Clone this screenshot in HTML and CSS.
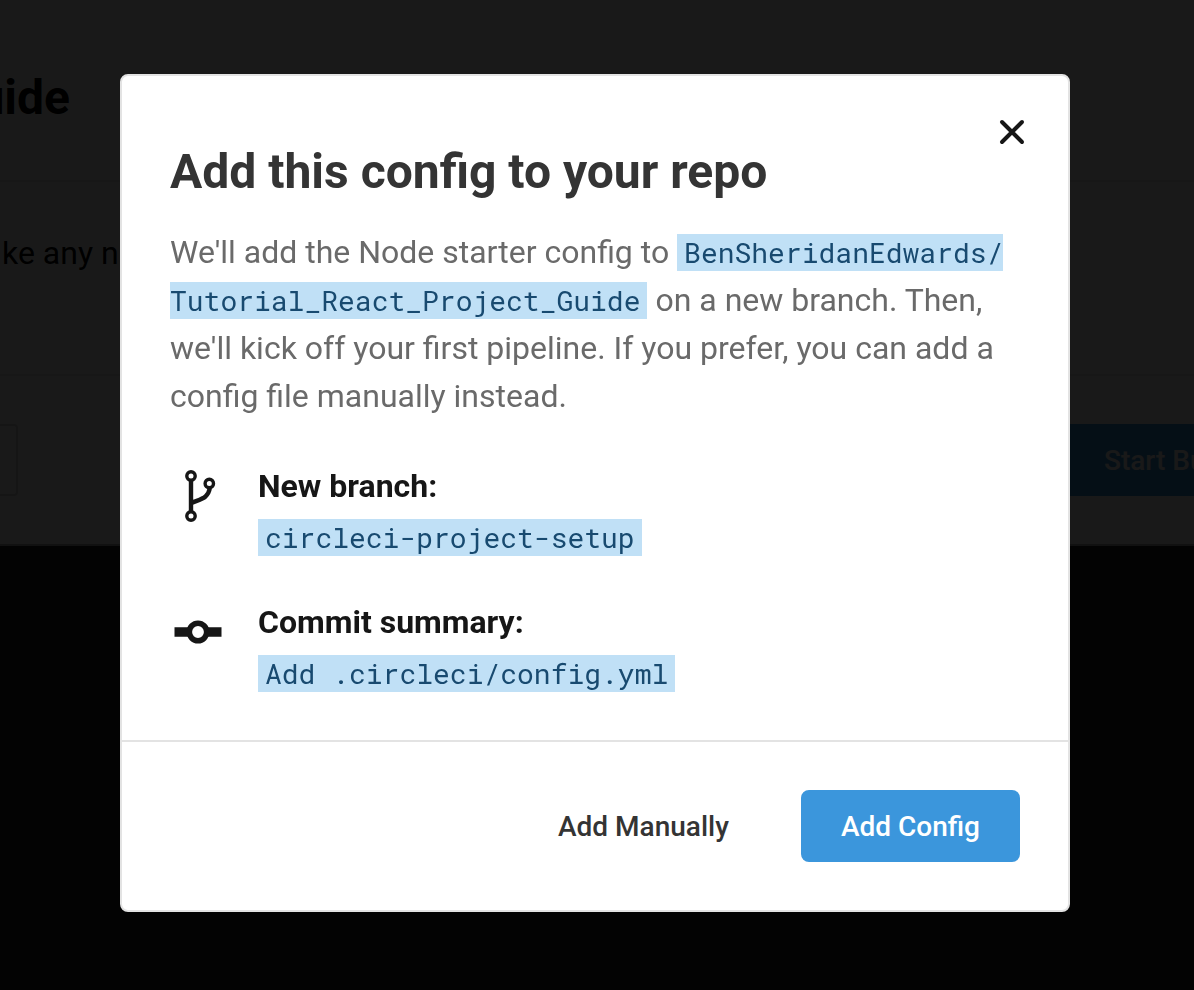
FILE: index.html
```html
<!DOCTYPE html>
<html lang="en">
<head>
<meta charset="utf-8">
<meta name="viewport" content="width=device-width, initial-scale=1">
<title>Add this config to your repo</title>
<link rel="stylesheet" href="styles.css">
</head>
<body>
<main class="page">
  <header class="page-header"><h1 class="page-title">uide</h1></header>
  <section class="page-intro"><p class="page-text">ke any n</p></section>
  <section class="page-actions">
    <div class="picker"></div>
    <button class="start-button" type="button" tabindex="-1">Start Bu</button>
  </section>
</main>
<div class="overlay">
  <div class="modal" role="dialog" aria-modal="true" aria-labelledby="modal-title">
    <div class="modal-body">
      <button class="close" type="button" aria-label="Close">
        <svg width="28" height="28" viewBox="0 0 28 28" fill="none" stroke="currentColor" stroke-width="4" stroke-linecap="round"><path d="M4 4l20 20M24 4L4 24"/></svg>
      </button>
      <h2 class="modal-title" id="modal-title">Add this config to your repo</h2>
      <p class="description">We'll add the Node starter config to <code class="code">BenSheridanEdwards/<wbr>Tutorial_React_Project_Guide</code> on a new branch. Then, we'll kick off your first pipeline. If you prefer, you can add a config file manually instead.</p>
      <dl class="details">
        <div class="detail">
          <svg class="detail-icon" width="56" height="56" viewBox="0 0 56 56" fill="none" stroke="currentColor" stroke-width="4.4"><circle cx="21" cy="8" r="4.200" stroke-width="3.400"/><circle cx="39.300" cy="15.500" r="4.200" stroke-width="3.400"/><circle cx="21" cy="48" r="4.200" stroke-width="3.400"/><path d="M21 12.500v31M21 35.200C27 32.500 32 31.500 35.500 28.500C38 26 39.200 24 39.700 20.500"/></svg>
          <div class="detail-text">
            <dt class="label">New branch:</dt>
            <dd class="value"><code class="code">circleci-project-setup</code></dd>
          </div>
        </div>
        <div class="detail">
          <svg class="detail-icon" width="56" height="56" viewBox="0 0 56 56" fill="none" stroke="currentColor"><circle cx="28" cy="28" r="8.700" stroke-width="5.600"/><path d="M4.500 28H19M37 28h14.500" stroke-width="9.600"/></svg>
          <div class="detail-text">
            <dt class="label">Commit summary:</dt>
            <dd class="value"><code class="code">Add .circleci/config.yml</code></dd>
          </div>
        </div>
      </dl>
    </div>
    <div class="modal-footer">
      <button class="button" type="button">Add Manually</button>
      <button class="button button-primary" type="button">Add Config</button>
    </div>
  </div>
</div>
</body>
</html>
```
FILE: styles.css
```css
* { box-sizing: border-box; }

body {
  margin: 0;
  background: #222;
  font-family: Roboto, "Liberation Sans", sans-serif;
  color: #161616;
  overflow: hidden;
}

h1, h2, p, dl, dd { margin: 0; }

button {
  font: inherit;
  border: 0;
  cursor: pointer;
}

.page { background: #fff; }

.page-header {
  display: flex;
  height: 182px;
  padding-top: 70px;
  border-bottom: 2px solid #e3e3e3;
}

.page-title {
  display: flex;
  justify-content: flex-end;
  width: 70px;
  color: #000;
  font-size: 48px;
  line-height: 56px;
}

.page-intro {
  height: 194px;
  padding: 47px 2px;
  border-bottom: 2px solid #e3e3e3;
}

.page-text {
  color: #000;
  font-size: 32px;
  line-height: 48px;
}

.page-actions {
  display: flex;
  justify-content: space-between;
  padding: 48px 0;
  border-bottom: 2px solid #aaa;
}

.picker {
  width: 18px;
  border: 2px solid #d0d0d0;
  border-left: 0;
  border-radius: 0 4px 4px 0;
}

.start-button {
  width: 130px;
  height: 72px;
  padding: 0 0 0 40px;
  overflow: hidden;
  background: #3b96dc;
  color: #fff;
  font-size: 28px;
  font-weight: 500;
  text-align: left;
  white-space: nowrap;
}

.overlay {
  position: fixed;
  inset: 0;
  display: grid;
  place-items: center;
  padding: 0 4px 4px 0;
  background: rgba(0, 0, 0, 0.9);
}

.modal {
  width: 100%;
  max-width: 950px;
  background: #fff;
  border: 2px solid #e3e3e3;
  border-radius: 8px;
}

.modal-body {
  position: relative;
  padding: 68px 48px 40px;
}

.close {
  position: absolute;
  top: 36px;
  right: 36px;
  display: grid;
  place-items: center;
  width: 40px;
  height: 40px;
  padding: 0;
  background: none;
  color: #161616;
}

.modal-title {
  color: #343434;
  font-size: 48px;
  line-height: 56px;
}

.description {
  margin-top: 28px;
  color: #6a6a6a;
  font-size: 32px;
  line-height: 48px;
}

.code {
  padding: 0 7px;
  background: #c0e0f6;
  color: #184a70;
  font-family: "Roboto Mono", "Liberation Mono", monospace;
  font-size: 28px;
  line-height: 28px;
}

.details {
  display: grid;
  gap: 34px;
  margin-top: 42px;
}

.detail {
  display: flex;
  gap: 32px;
}

.detail-icon {
  flex: none;
  margin-top: 6px;
}

.label {
  font-size: 32px;
  font-weight: 700;
  line-height: 48px;
}

.value {
  font-size: 32px;
  line-height: 54px;
}

.modal-footer {
  display: flex;
  justify-content: flex-end;
  gap: 32px;
  padding: 48px;
  border-top: 2px solid #e3e3e3;
}

.button {
  height: 72px;
  padding: 0 40px;
  border-radius: 8px;
  background: #fff;
  color: #343434;
  font-size: 28px;
  font-weight: 500;
}

.button-primary {
  background: #3b96dc;
  color: #fff;
}
```
